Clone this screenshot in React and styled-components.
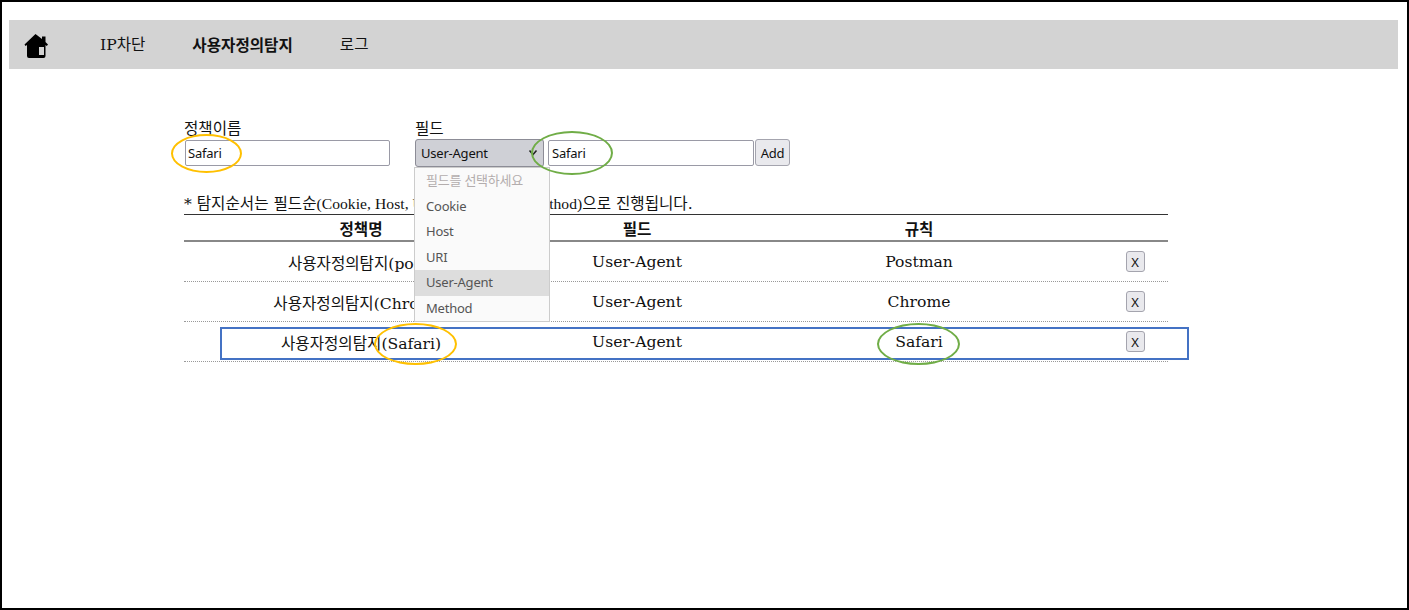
import React from "react";
import styled, { createGlobalStyle } from "styled-components";

const Global = createGlobalStyle`
  html, body { margin: 0; padding: 0; background: #fff; }
  body { font-family: "DejaVu Serif", "Noto Sans CJK KR", serif; font-size: 15.6px; color: #111; }
`;
const ui = `font: 13px "Noto Sans", "Noto Sans CJK KR", sans-serif; letter-spacing: -0.22px;`;
const Frame = styled.div`
  position: relative; box-sizing: border-box; width: 1409px; height: 610px;
  border: 2px solid #000; padding: 18px 9px 0 7px; overflow: hidden;
`;
const Nav = styled.nav`
  display: flex; align-items: center; height: 49px; background: #d3d3d3; padding-left: 15px;
`;
const HomeLink = styled.a`display: flex; width: 24px; height: 24px; margin-right: 52px; margin-top: 3px;`;
const NavItem = styled.a`
  color: #111; font-weight: ${p => (p.$active ? 700 : 400)}; margin-right: 47px; line-height: 49px; padding-top: 2px;
`;
const Content = styled.main`margin: 49px 0 0 175px; width: 984px;`;
const FormRow = styled.div`display: flex; align-items: flex-end; height: 48px;`;
const Field = styled.div`display: flex; flex-direction: column; &:first-child { width: 231px; }`;
const Label = styled.label`line-height: 20px; height: 20px;`;
const Controls = styled.div`display: flex; align-items: center; height: 27px;`;
const Input = styled.input`
  ${ui} box-sizing: border-box; height: 26px; width: ${p => p.$w}px; border: 1px solid #9a9aa6; border-radius: 2px;
  padding: 0 ${p => p.$pad}px; color: #111; background: #fff; margin-left: ${p => p.$ml || 0}px;
`;
const SelectBox = styled.div`
  ${ui} display: flex; align-items: center; justify-content: space-between; box-sizing: border-box;
  width: 129px; height: 28px; padding: 0 5px; background: #cfd0d6; border: 1px solid #8c8c96; border-radius: 3px;
  color: #111;
`;
const Btn = styled.button`
  ${ui} box-sizing: border-box; padding: 0; border: 1px solid #a4a4ae; border-radius: 3px; background: #e9e9ed; color: #111;
  width: ${p => p.$w}px; height: ${p => p.$h}px; margin-left: ${p => p.$ml || 0}px;
`;
const Note = styled.p`margin: 27px 0 0; height: 20px; line-height: 20px; padding-top: 1px; box-sizing: border-box; white-space: nowrap;`;
const NoteLatin = styled.span`font-family: "Liberation Serif", serif; letter-spacing: 0.05px;`;
const Grid = styled.div`
  display: grid; grid-template-columns: 354px 198px 366px 66px; align-items: center; justify-items: center;
  border-bottom: ${p => p.$head ? "2px solid #888" : "1px dotted #999"};
  border-top: ${p => p.$head ? "1px solid #333" : "0"};
  height: ${p => p.$head ? 25 : 39}px; margin-top: ${p => p.$head ? 1 : 0}px;
`;
const Head = styled.div`font-weight: 700;`;
const Cell = styled.div`white-space: nowrap;`;
const Dropdown = styled.ul`
  ${ui} position: absolute; left: 412px; top: 165px; width: 134px; height: 153px; margin: 0; padding: 0; list-style: none;
  background: #fafafa; border: 1px solid #ccc; color: #555;
`;
const Option = styled.li`
  height: 25.6px; line-height: 25.6px; padding-left: 11px;
  color: ${p => p.$muted ? "#b3adad" : "#555"}; background: ${p => p.$hi ? "#ddd" : "transparent"};
`;
const Oval = styled.div`
  position: absolute; box-sizing: border-box; border: 2px solid ${p => p.$c}; border-radius: 50%;
  left: ${p => p.$x - 2}px; top: ${p => p.$y - 2}px; width: ${p => p.$w}px; height: ${p => p.$h}px;
`;
const Highlight = styled.div`
  position: absolute; box-sizing: border-box; left: 218px; top: 325px; width: 969px; height: 33px; border: 2px solid #4472c4;
`;

const Home = () => (
  <svg width="24" height="24" viewBox="0 0 24 24" aria-hidden="true">
    <path
      fillRule="evenodd"
      d="M11.5 0 L18 5 V2.5 H21.5 V8 L24 10.5 L22.8 12 L21.5 11 V22 Q21.5 24 19.5 24 H5 Q3 24 3 22 V11 L1.5 12 L0.5 10.5 Z M15 13 V21 H20 V13 Z"
      fill="#000"
    />
  </svg>
);
const Chevron = () => (
  <svg width="10" height="8" viewBox="0 0 10 8" aria-hidden="true">
    <path d="M1.5 1.5 L5 5.5 L8.5 1.5" fill="none" stroke="#222" strokeWidth="1.6" />
  </svg>
);

const rows = [
  ["사용자정의탐지(post)", "User-Agent", "Postman"],
  ["사용자정의탐지(Chrome)", "User-Agent", "Chrome"],
  ["사용자정의탐지(Safari)", "User-Agent", "Safari"],
];
const options = ["Cookie", "Host", "URI", "User-Agent", "Method"];

export default function App() {
  return (
    <Frame>
      <Global />
      <Nav>
        <HomeLink><Home /></HomeLink>
        <NavItem>IP차단</NavItem>
        <NavItem $active>사용자정의탐지</NavItem>
        <NavItem>로그</NavItem>
      </Nav>
      <Content>
        <FormRow>
          <Field>
            <Label>정책이름</Label>
            <Controls><Input $w={205} $ml={1} $pad={2} defaultValue="Safari" /></Controls>
          </Field>
          <Field>
            <Label>필드</Label>
            <Controls>
              <SelectBox>User-Agent<Chevron /></SelectBox>
              <Input $w={206} $ml={4} $pad={3} defaultValue="Safari" />
              <Btn $w={35} $h={27} $ml={1}>Add</Btn>
            </Controls>
          </Field>
        </FormRow>
        <Note>* 탐지순서는 필드순<NoteLatin>(Cookie, Host, URI, User-Agent, Method)</NoteLatin>으로 진행됩니다.</Note>
        <Grid $head>
          <Head>정책명</Head><Head>필드</Head><Head>규칙</Head><span />
        </Grid>
        {rows.map(r => (
          <Grid key={r[0]}>
            <Cell>{r[0]}</Cell><Cell>{r[1]}</Cell><Cell>{r[2]}</Cell>
            <Btn $w={19} $h={21}>X</Btn>
          </Grid>
        ))}
      </Content>
      <Dropdown>
        <Option $muted>필드를 선택하세요</Option>
        {options.map(o => <Option key={o} $hi={o === "User-Agent"}>{o}</Option>)}
      </Dropdown>
      <Highlight />
      <Oval $c="#ffc000" $x={171} $y={134} $w={71} $h={39} />
      <Oval $c="#70ad47" $x={531} $y={131} $w={82} $h={44} />
      <Oval $c="#ffc000" $x={374} $y={323} $w={83} $h={42} />
      <Oval $c="#70ad47" $x={877} $y={323} $w={83} $h={42} />
    </Frame>
  );
}
